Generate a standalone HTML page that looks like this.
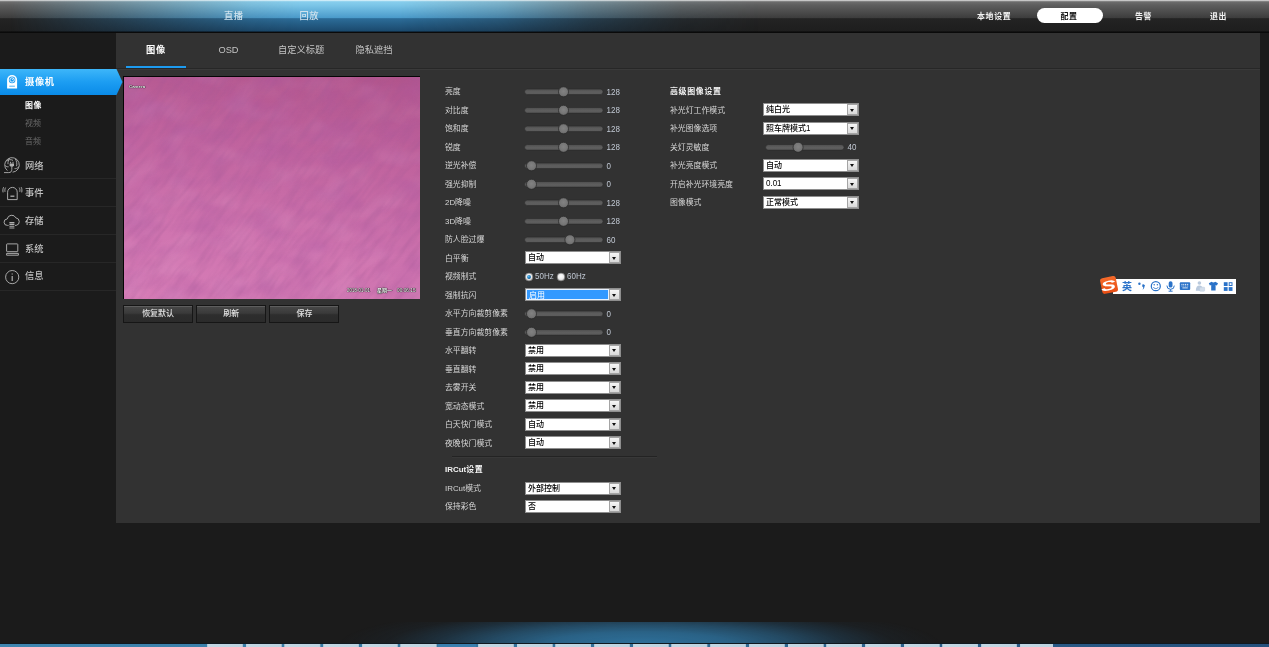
<!DOCTYPE html>
<html lang="zh-CN">
<head>
<meta charset="utf-8">
<title>配置 - 图像</title>
<style>
*{box-sizing:border-box;margin:0;padding:0}
html,body{width:1269px;height:647px;overflow:hidden;background:#1b1b1b}
body{position:relative;font-family:"Liberation Sans","Noto Sans CJK SC",sans-serif;font-size:8px;color:#c8c8c8;line-height:1}
/* header */
#hdr{position:absolute;left:0;top:0;width:1269px;height:33px;background:#0a0a0a;overflow:hidden}
#hdr .base{position:absolute;left:0;top:0;width:100%;height:32px;background:linear-gradient(#fafafa 0,#9c9c9c .9px,#6c6c6c 2px,#5e5e5e 5px,#3c3c3c 18px,#232323 18.6px,#1e1e1e 31px,#070707 32px)}
#hdr .glow{position:absolute;left:0;top:0;width:100%;height:32px;background:linear-gradient(#fbfeff 0,#a8dcf2 .9px,#86cdec 2px,#7cc6e8 5px,#4a9aca 18px,#2c6c98 18.6px,#1b4a6e 31px,#06101a 32px);-webkit-mask-image:linear-gradient(to right,rgba(0,0,0,0) 10px,rgba(0,0,0,.45) 130px,rgba(0,0,0,.9) 250px,#000 300px,#000 400px,rgba(0,0,0,.75) 500px,rgba(0,0,0,.35) 590px,rgba(0,0,0,.08) 680px,rgba(0,0,0,0) 760px);mask-image:linear-gradient(to right,rgba(0,0,0,0) 10px,rgba(0,0,0,.45) 130px,rgba(0,0,0,.9) 250px,#000 300px,#000 400px,rgba(0,0,0,.75) 500px,rgba(0,0,0,.35) 590px,rgba(0,0,0,.08) 680px,rgba(0,0,0,0) 760px)}
.nav{position:absolute;top:11.5px;font-size:9.25px;letter-spacing:.6px;color:#cfe3ee;white-space:nowrap;font-weight:500}
.navr{position:absolute;top:12.7px;font-size:7.95px;letter-spacing:.66px;color:#f2f2f2;white-space:nowrap;font-weight:bold}
#pill{position:absolute;left:1037px;top:8px;width:65.5px;height:15.4px;border-radius:8px;background:#fff}
/* panel */
#panel{position:absolute;left:116px;top:33px;width:1144.4px;height:490.4px;background:#323232}
#tabline{position:absolute;left:116px;top:68px;width:1144px;height:1px;background:#272727}
#tabline2{position:absolute;left:116px;top:69px;width:1144px;height:1px;background:#3a3a3a}
.tab{position:absolute;top:46.1px;font-size:9.25px;color:#c4c4c4;white-space:nowrap}
#tabul{position:absolute;left:126px;top:66px;width:60px;height:2px;background:#1d9bf0}
/* sidebar */
#act{position:absolute;left:0;top:69px;width:123px;height:26px;background:linear-gradient(#3db6f9,#1c9df2 50%,#0a8be8);clip-path:polygon(0 0,116.5px 0,122.5px 13px,116.5px 26px,0 26px)}
.side{position:absolute;left:25px;font-size:9.25px;color:#c2c2c2;font-weight:500;white-space:nowrap}
.sub{position:absolute;left:25px;font-size:7.95px;color:#6a6a6a;white-space:nowrap}
.sline{position:absolute;left:0;width:116px;height:1px;background:#272727}
#wrap{position:absolute;left:0;top:0;width:1269px;height:647px;will-change:transform;overflow:hidden}
.ico{position:absolute;overflow:visible}
/* video */
#vid{position:absolute;left:123px;top:76px;width:297.4px;height:223px;background:#050505}
#vidin{position:absolute;left:1px;top:1px;width:295.8px;height:221.5px;background:linear-gradient(188deg,#b1548b 0,#c0639e 35%,#cf74af 70%,#d67cb6 100%);overflow:hidden}
.osd{position:absolute;will-change:transform;color:#fff;font-size:4.6px;white-space:nowrap;text-shadow:0 0 1px #000,0 0 1px #000,.4px .4px 0 #222}
.btn{position:absolute;top:305px;width:70px;height:18px;border:1px solid #161616;background:linear-gradient(#484848 0,#3a3a3a 45%,#2d2d2d 55%,#2b2b2b 100%);box-shadow:inset 0 1px 0 #5e5e5e;color:#e4e4e4;font-size:7.95px;font-weight:500;text-align:center;line-height:16px}
/* form */
.lb{position:absolute;font-size:7.88px;color:#d6d6d6;white-space:nowrap}
.hd{position:absolute;font-size:7.95px;letter-spacing:.66px;color:#f4f4f4;white-space:nowrap;font-weight:bold}
.val{position:absolute;font-size:8px;color:#c2c9d4;white-space:nowrap;transform:scaleY(1.16);transform-origin:50% 55%}
.dg{display:inline-block;transform:scaleY(1.16);transform-origin:50% 55%}
.trk{position:absolute;width:78px;height:5px;border-radius:2.5px;background:linear-gradient(#505050,#5e5e5e 50%,#5a5a5a);box-shadow:0 0 0 .5px #2b2b2b}
.thb{position:absolute;width:8.8px;height:8.8px;margin:.6px;border-radius:5px;background:radial-gradient(circle at 50% 45%,#808080,#747474 60%,#5e5e5e);box-shadow:0 0 0 .7px #262626}
.sel{position:absolute;width:95.8px;height:13px;background:#fff;border:1px solid #8e8e8e;color:#000;font-weight:500;font-size:8px;line-height:11px;padding-left:2px;white-space:nowrap}
.sel i{position:absolute;right:0;top:0;width:11px;height:11px;background:linear-gradient(#f6f6f6,#d9d9d9);border:1px solid #a4a4a4}
.sel i:after{content:"";position:absolute;left:2.2px;top:3.6px;border-left:2.6px solid transparent;border-right:2.6px solid transparent;border-top:3px solid #111}
.sel.hi{color:#fff}
.sel.hi b{position:absolute;left:0;top:0;right:11.2px;bottom:0;background:#3399ff;font-weight:normal;padding-left:2px;line-height:11px;border:.6px solid #e8f2ff}
.rad{position:absolute;width:7.6px;height:7.6px;border-radius:4px;background:radial-gradient(circle at 50% 40%,#fff,#e4e4e4 60%,#bdbdbd);box-shadow:0 0 0 .6px #7a7a7a}
.rad.on:after{content:"";position:absolute;left:2px;top:2px;width:3.6px;height:3.6px;border-radius:2px;background:radial-gradient(circle at 40% 35%,#5ab4e8,#0b67a8 70%)}
.sep{position:absolute;height:1px;background:#232323;box-shadow:0 1px 0 #383838}
/* misc */
#bglow{position:absolute;left:330px;top:622px;width:620px;height:22px;background:radial-gradient(ellipse 300px 40px at 50% 100%,rgba(46,112,154,1) 0,rgba(44,106,146,.9) 30%,rgba(40,94,130,.7) 50%,rgba(34,76,106,.42) 68%,rgba(30,55,75,.16) 84%,rgba(27,27,27,0) 100%)}
#tbar{position:absolute;left:0;top:643.4px;width:1269px;height:4px;background:linear-gradient(to right,#3f86b0 0,#3b80aa 200px,#336f98 640px,#2a5a86 1040px,#24507c 1269px);border-top:.8px solid #10181f}
#tbtn{position:absolute;left:206.5px;top:644.4px;width:846.5px;height:3px;background:repeating-linear-gradient(to right,#9bb9cb 0,#c4d8e4 1px,#bdd3e0 35px,#8fb0c4 36px,rgba(0,0,0,0) 36.2px,rgba(0,0,0,0) 38.7px)}
#tact{position:absolute;left:438px;top:644.2px;width:38px;height:3px;background:#3a7fae}
</style>
</head>
<body>
<div id="wrap">
<div id="hdr"><div class="base"></div><div class="glow"></div>
<div class="nav" style="left:224px">直播</div>
<div class="nav" style="left:299.5px">回放</div>
<div class="navr" style="left:977px">本地设置</div>
<div id="pill"></div>
<div class="navr" style="left:1060.5px;color:#111">配置</div>
<div class="navr" style="left:1135px">告警</div>
<div class="navr" style="left:1210px">退出</div>
</div>

<div id="panel"></div>
<div id="tabline"></div><div id="tabline2"></div>
<div class="tab" style="left:146px;color:#fff;font-weight:bold;letter-spacing:.66px">图像</div>
<div class="tab" style="left:218.5px">OSD</div>
<div class="tab" style="left:278px">自定义标题</div>
<div class="tab" style="left:355.5px">隐私遮挡</div>
<div id="tabul"></div>

<div id="act"></div>
<svg class="ico" style="left:6px;top:74px" width="13" height="16" viewBox="0 0 13 16">
<path d="M1.1 14.6V6A5 5 0 0 1 11.1 6V14.6Z" fill="#fff"/>
<circle cx="6.1" cy="5.9" r="3.3" fill="#1e9df2"/>
<circle cx="6.1" cy="5.9" r="2.2" fill="none" stroke="#fff" stroke-width=".8"/>
<path d="M6.1 5.9 L7.6 4.3" stroke="#fff" stroke-width=".8"/>
<path d="M3.3 12.2H8.9" stroke="#1e9df2" stroke-width=".8"/>
</svg>
<div class="side" style="top:77.9px;color:#fff;font-weight:bold;letter-spacing:.66px">摄像机</div>
<div class="sub" style="top:102.2px;color:#fff;font-weight:bold;letter-spacing:.66px">图像</div>
<div class="sub" style="top:119.8px">视频</div>
<div class="sub" style="top:138.3px">音频</div>

<svg class="ico" style="left:3px;top:156px" width="18" height="18" viewBox="0 0 18 18" fill="none" stroke="#b0b0b0" stroke-width=".9">
<path d="M4.4 14.6A7.3 7.3 0 1 1 9.6 16.2"/>
<path d="M3.2 5.2C5.2 3.4 8 3.2 10 4.4M12.2 2.8C13.6 5 14.2 7.4 13.6 10.2M2.2 9.6C3.4 10.6 4.6 11 5.6 10.8M11.6 12.6C13 12.8 14.4 12.2 15.6 11M6.6 2.2C5.4 4 4.8 6 5 8.2"/>
<path d="M6.6 7.4H11V9.6L9.8 10.8H7.8L6.6 9.6Z" fill="#b0b0b0" stroke="none"/>
<path d="M7.6 7.4V5.8M10 7.4V5.8" stroke-width="1"/>
<path d="M8.8 10.8V13.6C8.8 15.6 7.6 16.6 5.8 16.6H1"/>
</svg>
<div class="side" style="top:161.6px">网络</div>
<div class="sline" style="top:178.4px"></div>

<svg class="ico" style="left:2px;top:185px" width="21" height="16" viewBox="0 0 21 16" fill="none" stroke="#b0b0b0" stroke-width=".95">
<path d="M5.6 14.6V7.2A4.8 4.8 0 0 1 15.2 7.2V14.6Z" stroke-linejoin="round"/>
<path d="M8.4 11.2H12.4" stroke-width="1.3"/>
<path d="M3.6 2.6C2.9 3.8 2.7 5.2 3 6.8M1.6 2.2C.8 3.8.7 5.6 1.1 7.4M17.2 2.6C17.9 3.8 18.1 5.2 17.8 6.8M19.2 2.2C20 3.8 20.1 5.6 19.7 7.4"/>
</svg>
<div class="side" style="top:188.8px">事件</div>
<div class="sline" style="top:206.2px"></div>

<svg class="ico" style="left:3px;top:213px" width="18" height="16" viewBox="0 0 18 16" fill="none" stroke="#b0b0b0" stroke-width=".95">
<path d="M5.6 12.4H4.4A3.2 3.2 0 0 1 4.2 6 4.6 4.6 0 0 1 12.9 4.9 3.8 3.8 0 0 1 13.2 12.4H12"/>
<path d="M6.4 9.6H11.4M6.4 11.4H11.4M6.4 13.2H11.4M6.4 15H11.4" stroke-width="1.1"/>
</svg>
<div class="side" style="top:216.8px">存储</div>
<div class="sline" style="top:234px"></div>

<svg class="ico" style="left:5px;top:242px" width="15" height="15" viewBox="0 0 15 15" fill="none" stroke="#b0b0b0" stroke-width=".95">
<rect x="1.6" y="1.9" width="11.2" height="7.8" rx=".6"/>
<path d="M1.6 11.4H13.4V13.2H1.6Z"/>
</svg>
<div class="side" style="top:244.8px">系统</div>
<div class="sline" style="top:261.8px"></div>

<svg class="ico" style="left:4px;top:268.5px" width="16" height="16" viewBox="0 0 16 16" fill="none" stroke="#b0b0b0" stroke-width=".95">
<circle cx="8.2" cy="8.1" r="6.6"/>
<path d="M8.2 7V12" stroke-width="1.2"/><path d="M8.2 4.4V5.6" stroke-width="1.2"/>
</svg>
<div class="side" style="top:272.2px">信息</div>
<div class="sline" style="top:289.6px"></div>

<div id="vid"><div id="vidin">
<svg width="297" height="222" style="position:absolute;left:0;top:0"><defs>
<filter id="nz" x="0" y="0" width="100%" height="100%"><feTurbulence type="fractalNoise" baseFrequency="0.035 0.2" numOctaves="2" seed="7"/><feColorMatrix type="matrix" values="0 0 0 0 0.36  0 0 0 0 0.1  0 0 0 0 0.3  1.4 0 0 0 -0.55"/></filter>
<filter id="nz2" x="0" y="0" width="100%" height="100%"><feTurbulence type="fractalNoise" baseFrequency="0.03 0.045" numOctaves="2" seed="3"/><feColorMatrix type="matrix" values="0 0 0 0 0.42  0 0 0 0 0.1  0 0 0 0 0.36  1.6 0 0 0 -0.62"/></filter>
<filter id="nz3" x="0" y="0" width="100%" height="100%"><feTurbulence type="fractalNoise" baseFrequency="0.03 0.045" numOctaves="2" seed="11"/><feColorMatrix type="matrix" values="0 0 0 0 0.9  0 0 0 0 0.6  0 0 0 0 0.85  1.4 0 0 0 -0.6"/></filter></defs>
<rect width="297" height="222" filter="url(#nz2)" opacity=".5"/>
<rect width="297" height="222" filter="url(#nz3)" opacity=".16"/>
<g transform="translate(148 111) rotate(-52) translate(-260 -260)"><rect width="520" height="520" filter="url(#nz)" opacity=".42"/></g>
</svg>
<div class="osd" style="left:5.4px;top:8.4px;font-size:4.4px;font-weight:bold">Camera</div>
<div class="osd" style="left:223px;top:211.8px;font-size:4.5px">2018-01-01</div>
<div class="osd" style="left:253px;top:211.2px;font-size:5px;font-weight:bold">星期一</div>
<div class="osd" style="left:272.6px;top:211.8px;font-size:4.8px">00:06:15</div>
</div></div>
<div class="btn" style="left:123px">恢复默认</div>
<div class="btn" style="left:196.2px">刷新</div>
<div class="btn" style="left:269.4px">保存</div>

<div id="ime" style="position:absolute;left:1099px;top:275px;width:140px;height:20px">
<div style="position:absolute;left:14px;top:4px;width:123px;height:14.5px;background:#fff"></div>
<div style="position:absolute;left:1.8px;top:2px;width:15.6px;height:15.6px;border-radius:2.6px;background:linear-gradient(#f56a2a,#e94e14);transform:rotate(-11deg)"></div>
<div style="position:absolute;left:2.4px;top:1.2px;width:15px;text-align:center;font:italic bold 16px/18px 'Liberation Sans',sans-serif;color:#fff;transform:rotate(-11deg) scale(1.42,.86);top:1.8px">S</div>
<div style="position:absolute;left:23px;top:5.6px;font-size:10px;font-weight:bold;color:#2a72c8;line-height:11px">英</div>
<svg style="position:absolute;left:38px;top:4px" width="100" height="15" viewBox="0 0 100 15" fill="#2a72c8">
<circle cx="2.4" cy="4.8" r="1.2"/><path d="M5.2 6.8a1.3 1.3 0 1 1 2.200 .9c-.1 1.400-.8 2.400-2 2.800.7-.8.9-1.400.8-2.300a1.300 1.300 0 0 1-1-1.400z"/>
<circle cx="18.8" cy="7.2" r="4.5" fill="none" stroke="#2a72c8" stroke-width="1.25"/><circle cx="17.200" cy="5.800" r=".75"/><circle cx="20.400" cy="5.800" r=".75"/><path d="M16.300 8.100c1.300 2 3.700 2 5 0" fill="none" stroke="#2a72c8" stroke-width=".9"/>
<rect x="31.700" y="2.200" width="3.800" height="6.400" rx="1.900"/><path d="M29.900 6.600a3.700 3.700 0 0 0 7.400 0" fill="none" stroke="#2a72c8" stroke-width="1"/><path d="M33.600 10.300v1.600M31.600 12.200h4" stroke="#2a72c8" stroke-width="1" fill="none"/>
<rect x="42.800" y="3.300" width="10.400" height="7.600" rx=".9"/><path d="M44.400 5.400h7.400" stroke="#fff" stroke-width=".9" stroke-dasharray="1.100 .7" fill="none"/><path d="M44.400 7h7.400" stroke="#dfeaf7" stroke-width=".8" stroke-dasharray="1.100 .7" fill="none"/><path d="M45.400 8.900h5.400" stroke="#fff" stroke-width=".8" fill="none"/>
<g fill="#b9c9dd"><circle cx="62.400" cy="4" r="1.800"/><path d="M58.800 11.800c0-3.600 1.400-5.400 3.600-5.400s3.600 1.800 3.600 5.400z"/><rect x="62.600" y="8.200" width="5" height="4" rx=".6" fill="#d4deea" stroke="#b9c9dd" stroke-width=".5"/></g>
<path d="M74.600 2.800c.9.900 2.700.9 3.600 0l2.800 1.500-1.100 2.300-1.300-.5v5.500h-4.400v-5.500l-1.300.5-1.100-2.300z"/>
<rect x="86.800" y="3.200" width="3.800" height="3.800"/><rect x="86.800" y="8.100" width="3.800" height="3.800"/><rect x="91.700" y="8.100" width="3.800" height="3.800"/><rect x="92.200" y="3.700" width="2.800" height="2.800" fill="none" stroke="#2a72c8" stroke-width="1"/>
</svg>
</div>

<svg width="0" height="0" style="position:absolute"><defs><radialGradient id="rg" cx=".5" cy=".4" r=".6"><stop offset="0" stop-color="#fff"/><stop offset=".6" stop-color="#ececec"/><stop offset="1" stop-color="#c4c4c4"/></radialGradient><linearGradient id="tg" x1="0" y1="0" x2="0" y2="1"><stop offset="0" stop-color="#4e4e4e"/><stop offset=".5" stop-color="#5e5e5e"/><stop offset="1" stop-color="#5a5a5a"/></linearGradient><radialGradient id="th" cx=".5" cy=".45" r=".6"><stop offset="0" stop-color="#828282"/><stop offset=".6" stop-color="#767676"/><stop offset="1" stop-color="#626262"/></radialGradient><radialGradient id="rb" cx=".4" cy=".35" r=".7"><stop offset="0" stop-color="#62bdf0"/><stop offset=".7" stop-color="#0d6db2"/><stop offset="1" stop-color="#0a4f88"/></radialGradient></defs></svg>
<div id="bglow"></div>
<div id="tbar"></div><div id="tbtn"></div><div id="tact"></div>
<div id="form">
<div class="lb" style="left:445px;top:88.2px">亮度</div>
<svg class="ico" style="left:523px;top:84px" width="84" height="14" viewBox="0 0 84 14"><rect x="1.60" y="5.00" width="78.4" height="5.6" rx="2.8" fill="url(#tg)" stroke="#2a2a2a" stroke-width=".6"/><circle cx="40.50" cy="7.80" r="5.05" fill="url(#th)" stroke="#272727" stroke-width=".7"/></svg>
<div class="val" style="left:606.5px;top:88.7px">128</div>
<div class="lb" style="left:445px;top:106.7px">对比度</div>
<svg class="ico" style="left:523px;top:103px" width="84" height="14" viewBox="0 0 84 14"><rect x="1.60" y="4.50" width="78.4" height="5.6" rx="2.8" fill="url(#tg)" stroke="#2a2a2a" stroke-width=".6"/><circle cx="40.50" cy="7.30" r="5.05" fill="url(#th)" stroke="#272727" stroke-width=".7"/></svg>
<div class="val" style="left:606.5px;top:107.2px">128</div>
<div class="lb" style="left:445px;top:125.2px">饱和度</div>
<svg class="ico" style="left:523px;top:121px" width="84" height="14" viewBox="0 0 84 14"><rect x="1.60" y="5.00" width="78.4" height="5.6" rx="2.8" fill="url(#tg)" stroke="#2a2a2a" stroke-width=".6"/><circle cx="40.50" cy="7.80" r="5.05" fill="url(#th)" stroke="#272727" stroke-width=".7"/></svg>
<div class="val" style="left:606.5px;top:125.7px">128</div>
<div class="lb" style="left:445px;top:143.7px">锐度</div>
<svg class="ico" style="left:523px;top:140px" width="84" height="14" viewBox="0 0 84 14"><rect x="1.60" y="4.50" width="78.4" height="5.6" rx="2.8" fill="url(#tg)" stroke="#2a2a2a" stroke-width=".6"/><circle cx="40.50" cy="7.30" r="5.05" fill="url(#th)" stroke="#272727" stroke-width=".7"/></svg>
<div class="val" style="left:606.5px;top:144.2px">128</div>
<div class="lb" style="left:445px;top:162.2px">逆光补偿</div>
<svg class="ico" style="left:523px;top:158px" width="84" height="14" viewBox="0 0 84 14"><rect x="1.60" y="5.00" width="78.4" height="5.6" rx="2.8" fill="url(#tg)" stroke="#2a2a2a" stroke-width=".6"/><circle cx="8.50" cy="7.80" r="5.05" fill="url(#th)" stroke="#272727" stroke-width=".7"/></svg>
<div class="val" style="left:606.5px;top:162.7px">0</div>
<div class="lb" style="left:445px;top:180.7px">强光抑制</div>
<svg class="ico" style="left:523px;top:177px" width="84" height="14" viewBox="0 0 84 14"><rect x="1.60" y="4.50" width="78.4" height="5.6" rx="2.8" fill="url(#tg)" stroke="#2a2a2a" stroke-width=".6"/><circle cx="8.50" cy="7.30" r="5.05" fill="url(#th)" stroke="#272727" stroke-width=".7"/></svg>
<div class="val" style="left:606.5px;top:181.2px">0</div>
<div class="lb" style="left:445px;top:199.2px">2D降噪</div>
<svg class="ico" style="left:523px;top:195px" width="84" height="14" viewBox="0 0 84 14"><rect x="1.60" y="5.00" width="78.4" height="5.6" rx="2.8" fill="url(#tg)" stroke="#2a2a2a" stroke-width=".6"/><circle cx="40.50" cy="7.80" r="5.05" fill="url(#th)" stroke="#272727" stroke-width=".7"/></svg>
<div class="val" style="left:606.5px;top:199.7px">128</div>
<div class="lb" style="left:445px;top:217.7px">3D降噪</div>
<svg class="ico" style="left:523px;top:214px" width="84" height="14" viewBox="0 0 84 14"><rect x="1.60" y="4.50" width="78.4" height="5.6" rx="2.8" fill="url(#tg)" stroke="#2a2a2a" stroke-width=".6"/><circle cx="40.50" cy="7.30" r="5.05" fill="url(#th)" stroke="#272727" stroke-width=".7"/></svg>
<div class="val" style="left:606.5px;top:218.2px">128</div>
<div class="lb" style="left:445px;top:236.2px">防人脸过爆</div>
<svg class="ico" style="left:523px;top:232px" width="84" height="14" viewBox="0 0 84 14"><rect x="1.60" y="5.00" width="78.4" height="5.6" rx="2.8" fill="url(#tg)" stroke="#2a2a2a" stroke-width=".6"/><circle cx="46.90" cy="7.80" r="5.05" fill="url(#th)" stroke="#272727" stroke-width=".7"/></svg>
<div class="val" style="left:606.5px;top:236.7px">60</div>
<div class="lb" style="left:445px;top:254.7px">白平衡</div>
<div class="sel" style="left:525px;top:251.0px">自动<i></i></div>
<div class="lb" style="left:445px;top:273.2px">视频制式</div>
<svg class="ico" style="left:524px;top:271.8px" width="10" height="10" viewBox="0 0 10 10"><circle cx="5" cy="5" r="3.9" fill="url(#rg)" stroke="#6e6e6e" stroke-width=".7"/><circle cx="5" cy="5" r="1.9" fill="url(#rb)"/></svg>
<div class="val" style="left:535px;top:273.2px">50Hz</div>
<svg class="ico" style="left:556.3px;top:271.8px" width="10" height="10" viewBox="0 0 10 10"><circle cx="5" cy="5" r="3.9" fill="url(#rg)" stroke="#6e6e6e" stroke-width=".7"/></svg>
<div class="val" style="left:567px;top:273.2px">60Hz</div>
<div class="lb" style="left:445px;top:291.7px">强制抗闪</div>
<div class="sel hi" style="left:525px;top:288.0px"><b>启用</b><i></i></div>
<div class="lb" style="left:445px;top:310.2px">水平方向裁剪像素</div>
<svg class="ico" style="left:523px;top:306px" width="84" height="14" viewBox="0 0 84 14"><rect x="1.60" y="5.00" width="78.4" height="5.6" rx="2.8" fill="url(#tg)" stroke="#2a2a2a" stroke-width=".6"/><circle cx="8.50" cy="7.80" r="5.05" fill="url(#th)" stroke="#272727" stroke-width=".7"/></svg>
<div class="val" style="left:606.5px;top:310.7px">0</div>
<div class="lb" style="left:445px;top:328.7px">垂直方向裁剪像素</div>
<svg class="ico" style="left:523px;top:325px" width="84" height="14" viewBox="0 0 84 14"><rect x="1.60" y="4.50" width="78.4" height="5.6" rx="2.8" fill="url(#tg)" stroke="#2a2a2a" stroke-width=".6"/><circle cx="8.50" cy="7.30" r="5.05" fill="url(#th)" stroke="#272727" stroke-width=".7"/></svg>
<div class="val" style="left:606.5px;top:329.2px">0</div>
<div class="lb" style="left:445px;top:347.2px">水平翻转</div>
<div class="sel" style="left:525px;top:343.5px">禁用<i></i></div>
<div class="lb" style="left:445px;top:365.7px">垂直翻转</div>
<div class="sel" style="left:525px;top:362.0px">禁用<i></i></div>
<div class="lb" style="left:445px;top:384.2px">去雾开关</div>
<div class="sel" style="left:525px;top:380.5px">禁用<i></i></div>
<div class="lb" style="left:445px;top:402.7px">宽动态模式</div>
<div class="sel" style="left:525px;top:399.0px">禁用<i></i></div>
<div class="lb" style="left:445px;top:421.2px">白天快门模式</div>
<div class="sel" style="left:525px;top:417.5px">自动<i></i></div>
<div class="lb" style="left:445px;top:439.7px">夜晚快门模式</div>
<div class="sel" style="left:525px;top:436.0px">自动<i></i></div>
<div class="sep" style="left:452.3px;top:456px;width:204.3px"></div>
<div class="hd" style="left:445px;top:466.4px"><span style="letter-spacing:0">IRCut</span>设置</div>
<div class="lb" style="left:445px;top:484.9px">IRCut模式</div>
<div class="sel" style="left:525px;top:481.9px">外部控制<i></i></div>
<div class="lb" style="left:445px;top:503.4px">保持彩色</div>
<div class="sel" style="left:525px;top:500.4px">否<i></i></div>
<div class="hd" style="left:670px;top:87.6px">高级图像设置</div>
<div class="lb" style="left:670px;top:106.7px">补光灯工作模式</div>
<div class="sel" style="left:763px;top:103.0px">纯白光<i></i></div>
<div class="lb" style="left:670px;top:125.2px">补光图像选项</div>
<div class="sel" style="left:763px;top:121.5px">照车牌模式<span class="dg">1</span><i></i></div>
<div class="lb" style="left:670px;top:143.7px">关灯灵敏度</div>
<svg class="ico" style="left:764px;top:140px" width="84" height="14" viewBox="0 0 84 14"><rect x="1.60" y="4.50" width="78.4" height="5.6" rx="2.8" fill="url(#tg)" stroke="#2a2a2a" stroke-width=".6"/><circle cx="34.10" cy="7.30" r="5.05" fill="url(#th)" stroke="#272727" stroke-width=".7"/></svg>
<div class="val" style="left:847.5px;top:144.2px">40</div>
<div class="lb" style="left:670px;top:162.2px">补光亮度模式</div>
<div class="sel" style="left:763px;top:158.5px">自动<i></i></div>
<div class="lb" style="left:670px;top:180.7px">开启补光环境亮度</div>
<div class="sel" style="left:763px;top:177.0px"><span class="dg">0.01</span><i></i></div>
<div class="lb" style="left:670px;top:199.2px">图像模式</div>
<div class="sel" style="left:763px;top:195.5px">正常模式<i></i></div>
</div><!--/form-->
</div>
</body>
</html>
